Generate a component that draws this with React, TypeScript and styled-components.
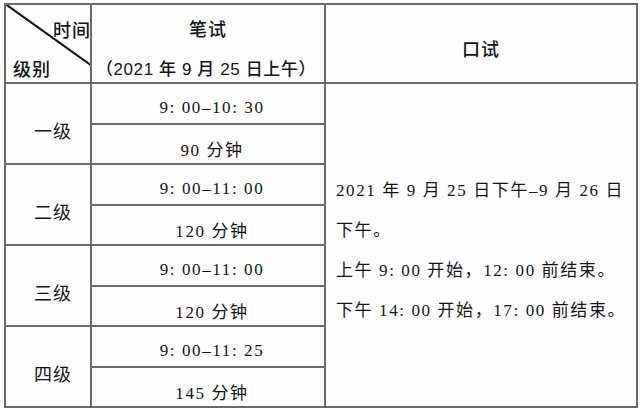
import styled, { createGlobalStyle } from "styled-components";

const GlobalStyle = createGlobalStyle`
  html, body {
    margin: 0;
    padding: 0;
    background: #ffffff;
  }
`;

interface LevelType {
  name: string;
  time: string;
  length: string;
}

const levels: LevelType[] = [
  { name: "一级", time: "9: 00–10: 30", length: "90 分钟" },
  { name: "二级", time: "9: 00–11: 00", length: "120 分钟" },
  { name: "三级", time: "9: 00–11: 00", length: "120 分钟" },
  { name: "四级", time: "9: 00–11: 25", length: "145 分钟" },
];

const serif = `"Liberation Serif", "Noto Sans CJK SC", serif`;
const sans = `"Liberation Sans", "Noto Sans CJK SC", sans-serif`;

const Table = styled.div`
  margin: 3px 0 0 4px;
  width: 634px;
  box-sizing: border-box;
  display: grid;
  grid-template-columns: 84px 232px 310px;
  grid-template-rows: 77px repeat(4, 39px 38px);
  gap: 2px;
  padding: 2px;
  background: #6a6a6a;
`;

const Cell = styled.div`
  background: #fdfdfd;
  display: flex;
  align-items: center;
  justify-content: center;
  color: #141414;
  box-sizing: border-box;
`;

const CornerCell = styled(Cell)`
  position: relative;
  display: block;
  font-family: ${sans};
  font-size: 18px;
  font-weight: 500;
  line-height: 1;
`;

const Diagonal = styled.svg`
  position: absolute;
  inset: 0;
  width: 100%;
  height: 100%;
`;

const CornerText = styled.span<{ $bottom?: boolean }>`
  position: absolute;
  top: ${(p) => (p.$bottom ? "56px" : "17px")};
  ${(p) => (p.$bottom ? "left: 7px;" : "right: -1px;")}
  letter-spacing: 1px;
`;

const HeadCell = styled(Cell)<{ $stack?: boolean }>`
  flex-direction: ${(p) => (p.$stack ? "column" : "row")};
  font-family: ${sans};
  font-size: 18px;
  font-weight: 500;
  letter-spacing: 1px;
  gap: 14px;
  padding-top: ${(p) => (p.$stack ? "7px" : "9px")};
`;

const SubTitle = styled.span`
  font-size: 17px;
  letter-spacing: 0.6px;
  margin-left: -4px;
`;

const LevelCell = styled(Cell)<{ $row: number }>`
  grid-row: ${(p) => p.$row} / span 2;
  font-family: ${serif};
  font-size: 18px;
  letter-spacing: 1px;
  padding: 12px 0 0 10px;
`;

const TimeCell = styled(Cell)`
  grid-column: 2;
  font-family: ${serif};
  font-size: 17px;
  letter-spacing: 1.6px;
  padding: 8px 0 0 8px;
`;

const OralCell = styled(Cell)`
  grid-column: 3;
  grid-row: 2 / span 8;
  display: block;
  padding: 87px 14px 0 10px;
  font-family: ${serif};
  font-size: 17px;
  letter-spacing: 1.6px;
  line-height: 40px;
`;

const Line = styled.div`
  white-space: nowrap;
`;

function App() {
  return (
    <>
      <GlobalStyle />
      <Table>
        <CornerCell>
          <Diagonal viewBox="0 0 84 77" preserveAspectRatio="none">
            <line x1="-2" y1="-2" x2="86" y2="61" stroke="#111" strokeWidth="2" />
          </Diagonal>
          <CornerText>时间</CornerText>
          <CornerText $bottom>级别</CornerText>
        </CornerCell>
        <HeadCell $stack>
          <span>笔试</span>
          <SubTitle>（2021 年 9 月 25 日上午）</SubTitle>
        </HeadCell>
        <HeadCell>口试</HeadCell>
        <OralCell>
          <Line>2021 年 9 月 25 日下午–9 月 26 日</Line>
          <Line>下午。</Line>
          <Line>上午 9: 00 开始，12: 00 前结束。</Line>
          <Line>下午 14: 00 开始，17: 00 前结束。</Line>
        </OralCell>
        {levels.map((level, i) => (
          <Row key={level.name} level={level} index={i} />
        ))}
      </Table>
    </>
  );
}

const Row = ({ level, index }: { level: LevelType; index: number }) => {
  return (
    <>
      <LevelCell $row={2 + index * 2}>{level.name}</LevelCell>
      <TimeCell>{level.time}</TimeCell>
      <TimeCell>{level.length}</TimeCell>
    </>
  );
};

export default App;
